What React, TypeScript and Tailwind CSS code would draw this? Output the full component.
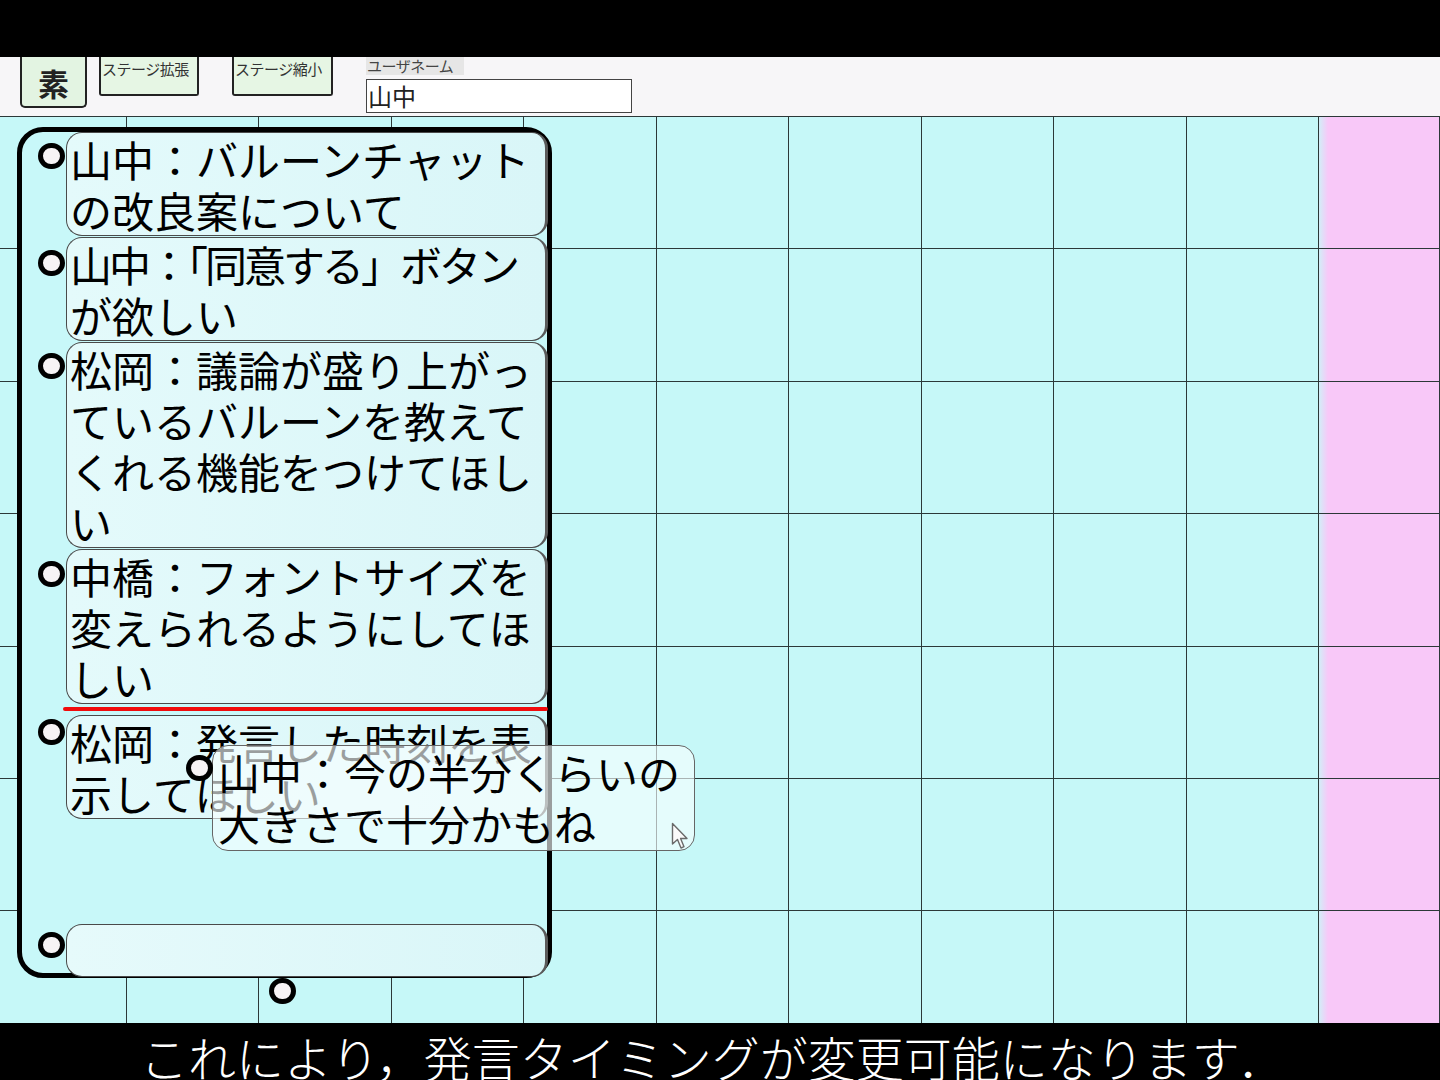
import React from "react";

const JP = { fontFamily: '"Noto Sans CJK JP", "Noto Sans", sans-serif' };

function Dot({ className = "" }: { className?: string }) {
  return (
    <div
      className={`absolute w-[27px] h-[26px] rounded-full border-[5px] border-black bg-[#f7f3f5] ${className}`}
    />
  );
}

type Line = { t: string; tight?: boolean };

function Balloon({ lines, dotTop = "top-[10px]" }: { lines: Line[]; dotTop?: string }) {
  return (
    <div className="relative rounded-[16px] border border-[#4a4a4a] border-r-[3px] border-r-[#5a5a5a] bg-[linear-gradient(to_right,#e4fafb,#d9f6f8)] pl-[3px] text-[42px] leading-[51px] text-black">
      <Dot className={`-left-[29px] ${dotTop}`} />
      {lines.map((l, i) => (
        <div key={i} className={`whitespace-nowrap ${l.tight ? "tracking-[-3px]" : ""}`}>
          {l.t}
        </div>
      ))}
    </div>
  );
}

export default function App() {
  const cols = Array.from({ length: 11 });
  const rows = Array.from({ length: 7 });
  return (
    <div className="w-[1440px] h-[1080px] flex flex-col bg-black overflow-hidden" style={JP}>
      {/* top black band */}
      <div className="h-[57px] bg-black shrink-0" />

      {/* toolbar */}
      <div className="h-[59px] shrink-0 bg-[#f7f6f8] flex items-start pl-[20px]">
        <div className="w-[67px] h-[51px] border-2 border-t-0 border-[#222] rounded-b-[5px] bg-[#e3f4e2] flex items-center justify-center text-[31px] font-bold text-[#222] leading-none pt-[2px]">
          素
        </div>
        <div className="ml-[12px] w-[100px] h-[39px] border-2 border-t-0 border-[#222] rounded-b-[3px] bg-[#e6f6e4] text-[15px] leading-none text-[#333] pl-[1px] pt-[4px] tracking-[-0.5px]">
          ステージ拡張
        </div>
        <div className="ml-[33px] w-[101px] h-[39px] border-2 border-t-0 border-[#222] rounded-b-[3px] bg-[#e6f6e4] text-[15px] leading-none text-[#333] pl-[1px] pt-[4px] tracking-[-0.5px]">
          ステージ縮小
        </div>
        <div className="ml-[33px] flex flex-col w-[266px]">
          <div className="w-[98px] h-[18px] bg-[#e6e6e6] text-[15px] leading-[18px] text-[#444] pl-[1px] tracking-[-0.5px]">
            ユーザネーム
          </div>
          <div className="mt-[4px] h-[34px] border-[1.5px] border-[#444] bg-white text-[24px] leading-[31px] text-[#222] pl-[1px]">
            山中
          </div>
        </div>
      </div>

      {/* stage */}
      <div className="relative h-[907px] shrink-0">
        <div className="grid h-full border-t border-[#2c3838] grid-cols-[127px_repeat(9,132.44px)_1fr] grid-rows-[repeat(6,132.4px)_1fr]">
          {rows.map((_, r) =>
            cols.map((_, c) => (
              <div
                key={`${r}-${c}`}
                className={`border-r border-b border-[#2c3838] ${
                  c === 10
                    ? "bg-[linear-gradient(to_right,#d2eef8,#f8c8f8_9px)]"
                    : "bg-[#c6f8f8]"
                } ${r === 6 ? "border-b-0" : ""}`}
              />
            ))
          )}
        </div>

        {/* balloon container */}
        <div className="absolute left-[17px] top-[11px] w-[535px] h-[851px] border-[5px] border-black rounded-[26px] bg-[#c8f8f9]">
          <div className="flex flex-col h-full pl-[44px] -mr-[1px]">
            <div className="flex flex-col gap-[1px]">
              <Balloon lines={[{ t: "山中：バルーンチャット" }, { t: "の改良案について" }]} />
              <Balloon
                lines={[{ t: "山中：「同意する」ボタン", tight: true }, { t: "が欲しい" }]}
                dotTop="top-[12px]"
              />
              <Balloon
                lines={[
                  { t: "松岡：議論が盛り上がっ" },
                  { t: "ているバルーンを教えて" },
                  { t: "くれる機能をつけてほし" },
                  { t: "い" },
                ]}
                dotTop="top-[10px]"
              />
              <Balloon
                lines={[
                  { t: "中橋：フォントサイズを" },
                  { t: "変えられるようにしてほ" },
                  { t: "しい" },
                ]}
                dotTop="top-[11px]"
              />
            </div>
            <div className="-ml-[3px] mt-[3px] mb-[4px] h-[4px] bg-[#f00c0c] rounded-full" />
            <Balloon
              lines={[{ t: "松岡：発言した時刻を表" }, { t: "示してほしい" }]}
              dotTop="top-[3px]"
            />
            <div className="mt-auto -mb-[4px] relative h-[53px] rounded-[16px] border border-[#4a4a4a] border-r-[3px] border-r-[#5a5a5a] bg-[linear-gradient(to_right,#e6fafb,#d9f6f8)]">
              <Dot className="-left-[29px] top-[7px]" />
            </div>
          </div>
        </div>

        {/* dragged balloon */}
        <div className="absolute left-[212px] top-[629px] w-[483px] h-[106px] rounded-[16px] border border-[#666] bg-[rgba(248,255,255,0.62)] pl-[5px] text-[42px] leading-[51px] text-black">
          <Dot className="-left-[27px] top-[9px]" />
          <div className="whitespace-nowrap">山中：今の半分くらいの</div>
          <div className="whitespace-nowrap">大きさで十分かもね</div>
          <svg
            className="absolute left-[458px] top-[76px]"
            width="18"
            height="28"
            viewBox="0 0 18 28"
          >
            <path
              d="M1.5 1.5 L1.5 22 L6.5 17.5 L10 26 L13 24.7 L9.6 16.5 L16 16.5 Z"
              fill="#fafafa"
              stroke="#6a6a6a"
              strokeWidth="1.4"
              strokeLinejoin="round"
            />
          </svg>
        </div>

        {/* lower connector dot */}
        <Dot className="left-[269px] top-[862px]" />
      </div>

      {/* caption */}
      <div className="flex-1 bg-black pl-[140px] pt-[9px]">
        <div className="text-[48px] leading-[48px] font-light text-white whitespace-nowrap">
          これにより，発言タイミングが変更可能になります．
        </div>
      </div>
    </div>
  );
}
